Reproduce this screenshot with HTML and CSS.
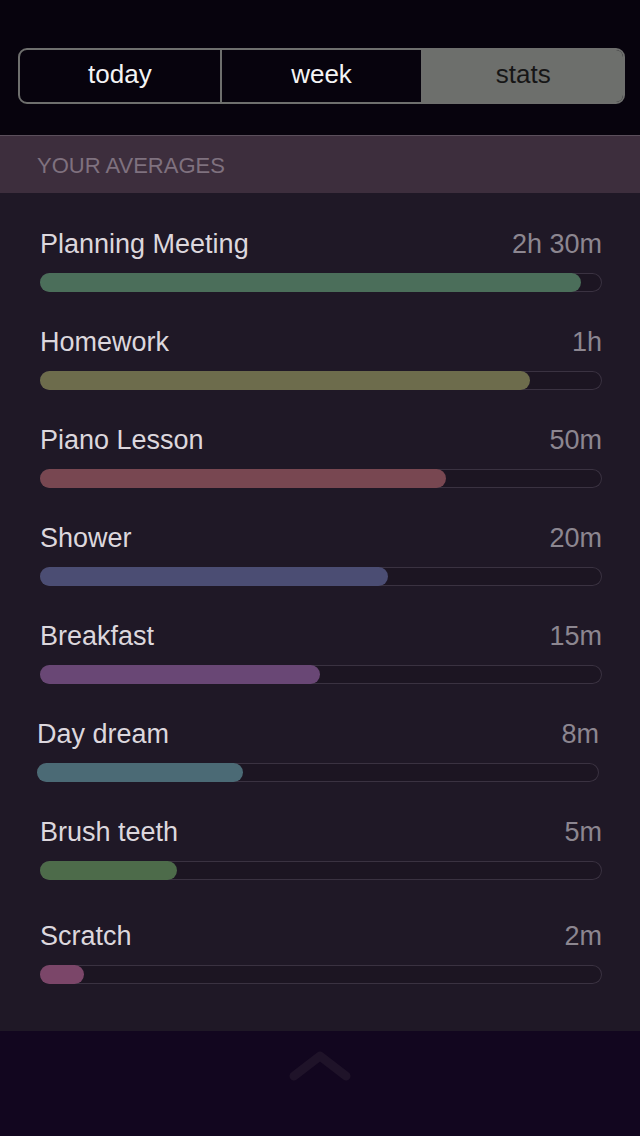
FILE: index.html
```html
<!DOCTYPE html>
<html>
<head>
<meta charset="utf-8">
<link rel="stylesheet" href="styles.css">
</head>
<body>
<div class="top">
  <div class="seg">
    <div class="seg-item">today</div>
    <div class="seg-item">week</div>
    <div class="seg-item active">stats</div>
  </div>
</div>
<div class="section-head">YOUR AVERAGES</div>
<div class="list">
  <div class="row">
    <div class="row-head"><span class="label">Planning Meeting</span><span class="value">2h 30m</span></div>
    <div class="track"><div class="fill c1" style="width:541px"></div></div>
  </div>
  <div class="row">
    <div class="row-head"><span class="label">Homework</span><span class="value">1h</span></div>
    <div class="track"><div class="fill c2" style="width:490px"></div></div>
  </div>
  <div class="row">
    <div class="row-head"><span class="label">Piano Lesson</span><span class="value">50m</span></div>
    <div class="track"><div class="fill c3" style="width:406px"></div></div>
  </div>
  <div class="row">
    <div class="row-head"><span class="label">Shower</span><span class="value">20m</span></div>
    <div class="track"><div class="fill c4" style="width:348px"></div></div>
  </div>
  <div class="row">
    <div class="row-head"><span class="label">Breakfast</span><span class="value">15m</span></div>
    <div class="track"><div class="fill c5" style="width:280px"></div></div>
  </div>
  <div class="row shifted">
    <div class="row-head"><span class="label">Day dream</span><span class="value">8m</span></div>
    <div class="track"><div class="fill c6" style="width:206px"></div></div>
  </div>
  <div class="row">
    <div class="row-head"><span class="label">Brush teeth</span><span class="value">5m</span></div>
    <div class="track"><div class="fill c7" style="width:137px"></div></div>
  </div>
  <div class="row last">
    <div class="row-head"><span class="label">Scratch</span><span class="value">2m</span></div>
    <div class="track"><div class="fill c8" style="width:44px"></div></div>
  </div>
</div>
<div class="bottom">
  <svg class="chevron" width="64" height="32" viewBox="0 0 64 32">
    <polyline points="6,26 32,6 58,26" fill="none" stroke="#1f1329" stroke-width="9" stroke-linecap="round" stroke-linejoin="round"/>
  </svg>
</div>
</body>
</html>
```

FILE: styles.css
```css
html, body {
  margin: 0;
  padding: 0;
}
body {
  width: 640px;
  height: 1136px;
  background: #07030d;
  font-family: "Liberation Sans", Arial, sans-serif;
  overflow: hidden;
}
.top {
  padding: 48px 15px 0 18px;
  height: 88px;
  box-sizing: border-box;
  background: #07030d;
}
.seg {
  display: flex;
  height: 56px;
  box-sizing: border-box;
  border: 2px solid #6e6f6d;
  border-radius: 9px;
  overflow: hidden;
}
.seg-item {
  flex: 1;
  display: flex;
  align-items: center;
  justify-content: center;
  color: #f4f4f4;
  font-size: 26px;
  padding-bottom: 3px;
  box-sizing: border-box;
}
.seg-item + .seg-item {
  border-left: 2px solid #6e6f6d;
}
.seg-item.active {
  background: #6d6f6c;
  color: #161616;
}
.section-head {
  margin-top: 47px;
  border-top: 1px solid #5b4f5b;
  background: #3d2e3d;
  height: 58px;
  box-sizing: border-box;
  padding-left: 37px;
  padding-top: 2px;
  display: flex;
  align-items: center;
  color: #7f717f;
  font-size: 22px;
}
.list {
  background: #1f1826;
  padding: 32px 38px 47px 40px;
  display: flex;
  flex-direction: column;
  gap: 31px;
}
.row {
  display: flex;
  flex-direction: column;
  gap: 14px;
}
.row.shifted {
  margin-left: -3px;
  margin-right: 3px;
}
.row.last {
  margin-top: 6px;
}
.row-head {
  display: flex;
  justify-content: space-between;
  height: 34px;
  font-size: 27px;
  line-height: 30px;
  padding-top: 4px;
  box-sizing: border-box;
}
.label {
  color: #dcd7dd;
}
.value {
  color: #8c8690;
}
.track {
  height: 19px;
  border-radius: 10px;
  background: #1c1522;
  box-shadow: inset 0 0 0 1px #3a3241;
  display: flex;
}
.fill {
  height: 19px;
  border-radius: 10px;
}
.c1 { background: #4b6e5a; }
.c2 { background: #6d6c4c; }
.c3 { background: #784751; }
.c4 { background: #4b4d73; }
.c5 { background: #694775; }
.c6 { background: #4b6a75; }
.c7 { background: #4d6b4a; }
.c8 { background: #7b4669; }
.bottom {
  background: #12061f;
  height: 120px;
  display: flex;
  justify-content: center;
  padding-top: 19px;
  box-sizing: border-box;
}
```
